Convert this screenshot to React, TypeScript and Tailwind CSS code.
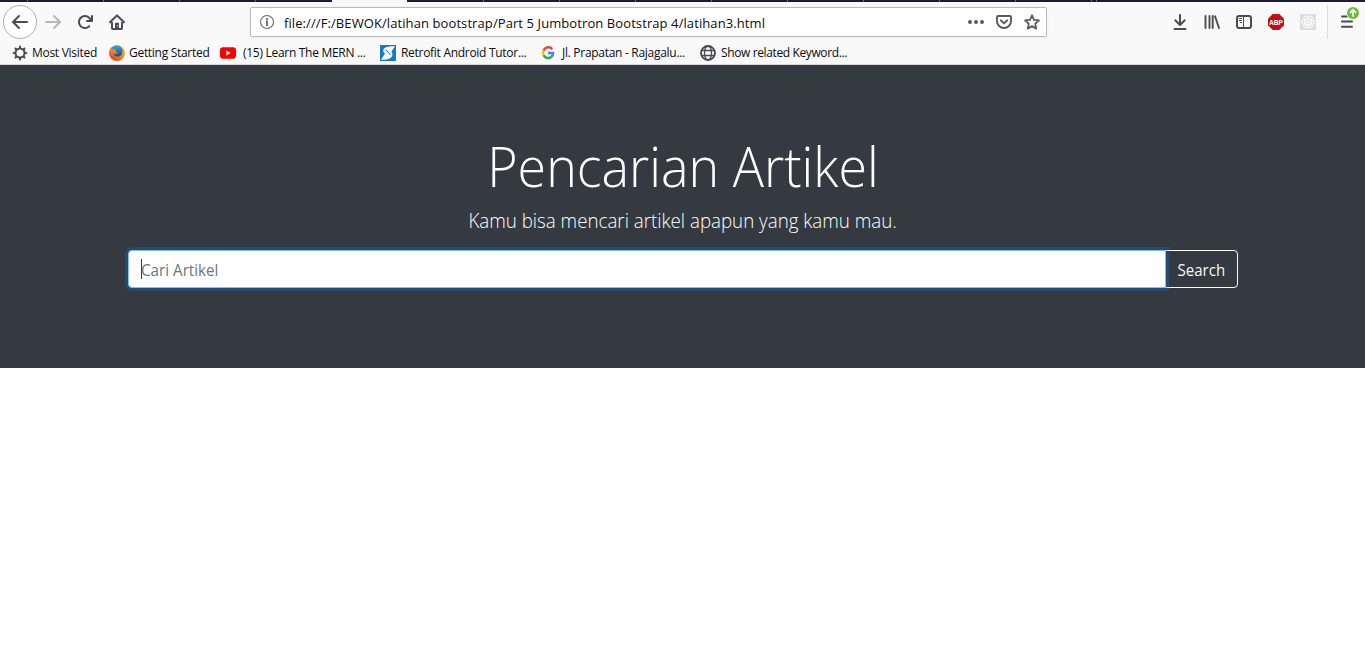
import type { ReactNode } from "react";

const chromeFont = "font-['Open_Sans','Noto_Sans',sans-serif]";

function Glyph({ children, className = "" }: { children: ReactNode; className?: string }) {
  return (
    <svg viewBox="0 0 16 16" width="16" height="16" fill="none" className={`shrink-0 overflow-visible ${className}`}>
      {children}
    </svg>
  );
}

const ARROW_LEFT =
  "M15 7H3.414l4.293-4.293a1 1 0 0 0-1.414-1.414l-6 6a1 1 0 0 0 0 1.414l6 6a1 1 0 0 0 1.414-1.414L3.414 9H15a1 1 0 0 0 0-2z";

const tabs = [
  "w-[28px]", "w-[76px]", "w-[76px]", "w-[76px]", "w-[76px]", "active",
  "w-[77px]", "w-[76px]", "w-[76px]", "w-[76px]", "w-[76px]", "w-[76px]",
  "w-[76px]", "w-[76px]", "w-[76px]", "w-[5px]",
];

function TabStrip() {
  return (
    <div className="flex h-0.5 bg-[#1b1a38]">
      {tabs.map((w, i) =>
        w === "active" ? (
          <div key={i} className="w-[75px] shrink-0 bg-[#f9f9fa]" />
        ) : (
          <div key={i} className={`${w} shrink-0 ${i === 4 ? "" : "border-r border-[#66667a]"}`} />
        ),
      )}
    </div>
  );
}

function AddressBar() {
  return (
    <div className="ml-[125px] flex h-[30px] w-[797px] items-center rounded-[2px] border border-[#b9b9ba] bg-white pr-1.5 pl-2 shadow-[0_1px_3px_rgba(0,0,0,0.06)]">
      <Glyph>
        <circle cx="8" cy="8" r="6.5" stroke="#6b6b6c" strokeWidth="1.1" />
        <path d="M8 7.2v4" stroke="#5b5b5c" strokeWidth="1.7" strokeLinecap="round" />
        <circle cx="8" cy="4.9" r="1" fill="#5b5b5c" />
      </Glyph>
      <span className="ml-[9px] pt-0.5 text-[13px] leading-4 tracking-[0.09px] whitespace-pre text-[#0c0c0d]">
        file:///F:/BEWOK/latihan bootstrap/Part 5 Jumbotron Bootstrap 4/latihan3.html
      </span>
      <div className="ml-auto flex gap-3">
        <Glyph>
          <g fill="#5b5b5c">
            <circle cx="2" cy="8" r="2" />
            <circle cx="8" cy="8" r="2" />
            <circle cx="14" cy="8" r="2" />
          </g>
        </Glyph>
        <Glyph>
          <path d="M2 2h12a1 1 0 0 1 1 1v4.3a7 6.7 0 0 1-14 0V3a1 1 0 0 1 1-1z" stroke="#5b5b5c" strokeWidth="1.9" />
          <path d="M4.8 6.3 8 9.4l3.2-3.1" stroke="#5b5b5c" strokeWidth="1.9" strokeLinecap="round" strokeLinejoin="round" />
        </Glyph>
        <Glyph>
          <path
            d="m8 1.3 2 4.6 5 .5-3.8 3.3 1.1 4.9L8 12.1l-4.3 2.5 1.1-4.9L1 6.4l5-.5z"
            stroke="#5b5b5c"
            strokeWidth="1.8"
            strokeLinejoin="round"
          />
        </Glyph>
      </div>
    </div>
  );
}

function Toolbar() {
  return (
    <div className="flex h-10 items-center pl-[3px]">
      <div className="flex h-[34px] w-[34px] items-center justify-center rounded-full border border-[#aeaeaf] bg-white">
        <Glyph>
          <path d={ARROW_LEFT} fill="#4c4c4f" />
        </Glyph>
      </div>
      <Glyph className="ml-2 -scale-x-100">
        <path d={ARROW_LEFT} fill="#b8b8b9" />
      </Glyph>
      <Glyph className="ml-4">
        <path
          d="M15 1a1 1 0 0 0-1 1v2.418A6.995 6.995 0 1 0 8 15a6.954 6.954 0 0 0 4.95-2.05 1 1 0 0 0-1.414-1.414A5.019 5.019 0 1 1 12.549 6H10a1 1 0 0 0 0 2h5a1 1 0 0 0 1-1V2a1 1 0 0 0-1-1z"
          fill="#4c4c4f"
        />
      </Glyph>
      <Glyph className="ml-4">
        <path d="M1 8.3 8 1.4l7 6.9" stroke="#4c4c4f" strokeWidth="2" strokeLinecap="round" strokeLinejoin="round" />
        <path d="M3 8v6.2a.8.8 0 0 0 .8.8h8.4a.8.8 0 0 0 .8-.8V8" stroke="#4c4c4f" strokeWidth="2" />
        <path d="M6 15V9.5a.8.8 0 0 1 .8-.8h2.4a.8.8 0 0 1 .8.8V15z" fill="#4c4c4f" />
        <circle cx="8.5" cy="11.8" r=".6" fill="#fff" />
      </Glyph>
      <AddressBar />
      <div className="ml-[125px] flex items-center gap-4">
        <Glyph>
          <path d="M8 1v9.5M3.3 6.3 8 11l4.700-4.700M2.500 15h11" stroke="#4c4c4f" strokeWidth="2" strokeLinecap="round" strokeLinejoin="round" />
        </Glyph>
        <Glyph>
          <path d="M1.5 1.9v12.2M5.5 1.9v12.2M8.7 1.9v12.2" stroke="#4c4c4f" strokeWidth="1.9" strokeLinecap="round" />
          <path d="m11 2.3 4 11.7" stroke="#4c4c4f" strokeWidth="1.9" strokeLinecap="round" />
        </Glyph>
        <Glyph>
          <rect x="1" y="2" width="14" height="12" rx="2" stroke="#4c4c4f" strokeWidth="2" />
          <path d="M7.5 2v12" stroke="#4c4c4f" strokeWidth="1" />
          <path d="M3 4.5h3M3 6.5h3M4 8.5h2" stroke="#4c4c4f" strokeWidth="1" />
        </Glyph>
        <Glyph>
          <path d="M4.7 0h6.6L16 4.7v6.6L11.3 16H4.7L0 11.3V4.7z" fill="#c70d12" />
          <text x="8" y="10.9" textAnchor="middle" textLength="14" lengthAdjust="spacingAndGlyphs" fill="#fff" className="font-['Liberation_Sans',sans-serif] text-[8px] font-bold">
            ABP
          </text>
        </Glyph>
        <Glyph>
          <rect width="16" height="16" fill="#dedede" />
          <g stroke="#fafafa" strokeWidth="1.1">
            <ellipse cx="8" cy="8" rx="6.5" ry="2.7" />
            <ellipse cx="8" cy="8" rx="6.5" ry="2.7" transform="rotate(60 8 8)" />
            <ellipse cx="8" cy="8" rx="6.5" ry="2.7" transform="rotate(120 8 8)" />
          </g>
          <circle cx="8" cy="8" r="1.3" fill="#fafafa" />
        </Glyph>
      </div>
      <div className="ml-[11px] h-[34px] w-px bg-[#dcdcdd]" />
      <svg viewBox="0 0 20 26" width="20" height="26" className="mt-[-8px] ml-3 shrink-0" fill="none">
        <path d="M2 11.5h4.500M2 16.5h10M2 21.800h10" stroke="#4c4c4f" strokeWidth="2" strokeLinecap="round" />
        <circle cx="13" cy="8" r="6" fill="#6abf36" />
        <path d="M13 11.7V5M10 7.8l3-3 3 3" stroke="#fff" strokeWidth="1.7" />
      </svg>
    </div>
  );
}

function Bookmark({ icon, label, width }: { icon: ReactNode; label: string; width: string }) {
  return (
    <div className={`flex shrink-0 items-center gap-1 ${width}`}>
      {icon}
      <span className="text-[12px] leading-4 whitespace-nowrap">{label}</span>
    </div>
  );
}

function BookmarksBar() {
  return (
    <div className="flex h-[22px] items-center pl-3 tracking-[-0.29px] text-[#0c0c0d]">
      <Bookmark
        width="w-[97px]"
        label="Most Visited"
        icon={
          <Glyph>
            <circle cx="8" cy="8" r="4.5" stroke="#4c4c4f" strokeWidth="2" />
            <path
              d="M8 1.6v1.500M8 12.900v1.500M1.600 8h1.500M12.900 8h1.500M3.500 3.500l1 1M11.500 11.500l1 1M12.500 3.500l-1 1M4.500 11.500l-1 1"
              stroke="#4c4c4f"
              strokeWidth="2"
              strokeLinecap="round"
            />
          </Glyph>
        }
      />
      <Bookmark
        width="w-[111px]"
        label="Getting Started"
        icon={
          <Glyph>
            <defs>
              <linearGradient id="fox" x1="0.9" y1="0" x2="0.2" y2="1">
                <stop offset="0" stopColor="#ffd44a" />
                <stop offset=".45" stopColor="#f7941d" />
                <stop offset="1" stopColor="#d8372a" />
              </linearGradient>
              <linearGradient id="globe" x1="0" y1="0" x2="0" y2="1">
                <stop offset="0" stopColor="#35a6df" />
                <stop offset="1" stopColor="#1c4a8c" />
              </linearGradient>
            </defs>
            <circle cx="8" cy="8" r="8" fill="url(#fox)" />
            <path d="M3 2.7C6-.5 12-.2 13.500 4.500c.6 3.500-.8 6.500-4 7-2.500.3-4.500-1-5-2.700l2.500.4 2-1.500-2.500-.8.5-1.700-1.800-1.200L3 4.500z" fill="url(#globe)" />
            <path d="M1 3l2 1.200 2.200-.4-.3 1.600 2.100.5-.5 1.400-2 .8L2 9z" fill="#ee7f1b" />
          </Glyph>
        }
      />
      <Bookmark
        width="w-[160px]"
        label="(15) Learn The MERN ..."
        icon={
          <Glyph className="mr-[3px]">
            <rect x="0" y="2.3" width="16" height="11.4" rx="3" fill="#f00" />
            <path d="m6.4 5.6 4.3 2.4-4.3 2.4z" fill="#fff" />
          </Glyph>
        }
      />
      <Bookmark
        width="w-[160px]"
        label="Retrofit Android Tutor..."
        icon={
          <Glyph className="mr-px">
            <rect width="16" height="16" fill="#157dbe" />
            <path d="M15 1.500C10.500 1 5.500 1.500 3.600 4.200 2.800 6 3.600 7.300 5 8.600 3.800 10.500 2.500 12.500 1 14.500c4.500.6 9.300 0 11-3.200.9-2 .3-3.400-.6-4.600C12.500 5 13.800 3.200 15 1.500z" fill="#fff" />
            <path d="M5.500 5.200c2 .9 3.800 2.900 4.800 5" stroke="#157dbe" strokeWidth="1" />
          </Glyph>
        }
      />
      <Bookmark
        width="w-[160px]"
        label="Jl. Prapatan - Rajagalu..."
        icon={
          <Glyph className="mr-[2px]">
            <g strokeWidth="2.5">
              <path d="M12.2 4.1A5 5 0 0 0 3.6 5.7" stroke="#ea4335" />
              <path d="M3.6 5.7a5 5 0 0 0 0 4.6" stroke="#fbbc05" />
              <path d="M3.6 10.3a5 5 0 0 0 7.8 1.5" stroke="#34a853" />
              <path d="M8 8h5a5 5 0 0 1-1.6 3.8" stroke="#4285f4" />
            </g>
          </Glyph>
        }
      />
      <Bookmark
        width="w-[160px] tracking-[-0.38px]"
        label="Show related Keyword..."
        icon={
          <Glyph className="mr-px">
            <circle cx="8" cy="8" r="7" stroke="#4c4c4f" strokeWidth="1.9" />
            <ellipse cx="8" cy="8" rx="3.5" ry="7" stroke="#4c4c4f" strokeWidth="1.3" />
            <path d="M2 5.5h12M2 10.5h12" stroke="#4c4c4f" strokeWidth="1.3" />
          </Glyph>
        }
      />
    </div>
  );
}

function Jumbotron() {
  return (
    <main className="flex h-[303px] flex-col items-center bg-[#343a40] pt-16 text-white">
      <h1 className="mt-[3px] scale-x-[0.928] text-[56px] leading-[67px] font-light whitespace-nowrap">Pencarian Artikel</h1>
      <p className="mt-[7px] scale-x-[0.937] text-[20px] leading-[30px] font-light whitespace-nowrap">
        Kamu bisa mencari artikel apapun yang kamu mau.
      </p>
      <form className="mt-[14px] flex h-[38px] w-[1110px]">
        <div className="z-10 flex flex-1 items-center rounded-l-[4px] border border-[#80bdff] bg-white pl-3 shadow-[0_0_0_3px_rgba(0,123,255,0.25)]">
          <span className="h-5 w-px bg-[#343a40]" />
          <span className="-ml-px origin-left scale-x-[0.95] pt-0.5 text-[16px] leading-6 text-[#6c757d]">Cari Artikel</span>
        </div>
        <button type="button" className="-ml-px flex w-[73px] items-center justify-center rounded-r-[4px] border border-[#f8f9fa] pt-0.5 text-[16px] leading-6 text-[#f8f9fa]">
          <span className="scale-x-[0.94]">Search</span>
        </button>
      </form>
    </main>
  );
}

export default function App() {
  return (
    <div className={`h-[650px] w-[1365px] overflow-hidden bg-white ${chromeFont}`}>
      <header className="h-[65px] border-b border-[#d5d5d6] bg-[#f9f9fa]">
        <TabStrip />
        <Toolbar />
        <BookmarksBar />
      </header>
      <Jumbotron />
    </div>
  );
}
